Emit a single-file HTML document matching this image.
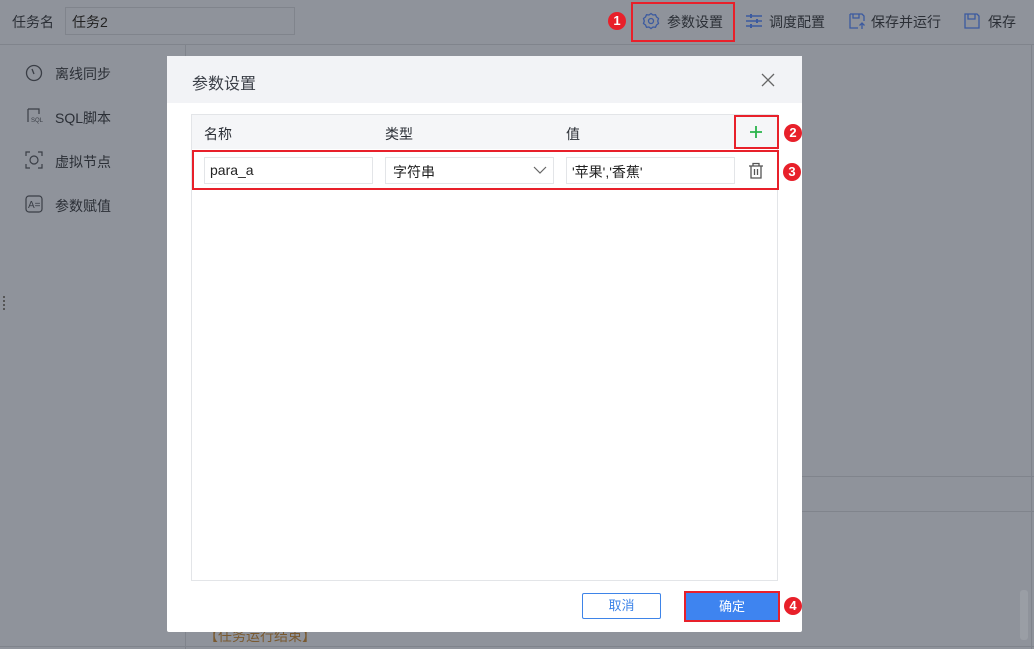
<!DOCTYPE html>
<html><head><meta charset="utf-8"><style>
*{box-sizing:border-box;margin:0;padding:0}
body{width:1034px;height:649px;overflow:hidden;background:#8f939b;font-family:"Liberation Sans","Noto Sans CJK SC",sans-serif;font-size:14px;color:#333;position:relative}
.a{position:absolute}
.t{color:#2b2f36}
.badge{position:absolute;width:18px;height:18px;border-radius:50%;background:#e8202a;color:#fff;font-size:13px;text-align:center;line-height:18px;font-weight:bold}
.rb{position:absolute;border:2px solid #e8202a}
</style></head><body>
<!-- background page -->
<div class="a" style="left:0;top:44px;width:1034px;height:1px;background:#80848c"></div>
<div class="a" style="left:185px;top:45px;width:1px;height:604px;background:#80848c"></div>
<div class="a" style="left:186px;top:476px;width:848px;height:1px;background:#80848c"></div>
<div class="a" style="left:186px;top:511px;width:848px;height:1px;background:#80848c"></div>
<div class="a" style="left:0;top:646px;width:1034px;height:1px;background:#80848c"></div>
<div class="a" style="left:1031px;top:45px;width:1px;height:604px;background:#80848c"></div>
<div class="a" style="left:1020px;top:590px;width:8px;height:50px;background:#9a9ea5;border-radius:3px"></div>
<div class="a t" style="left:12px;top:12px">任务名</div>
<div class="a" style="left:65px;top:7px;width:230px;height:28px;border:1px solid #80848c"></div>
<div class="a" style="left:72px;top:12px;color:#222">任务2</div>
<div class="a" style="left:204px;top:626px;color:#7a5a30">【任务运行结束】</div>

<svg class="a" style="left:24px;top:63px" width="20" height="20" viewBox="0 0 20 20" fill="none" stroke="#3a3e46" stroke-width="1.3"><circle cx="10" cy="10" r="7.5"/><path d="M8 6l2 5"/></svg>
<div class="a t" style="left:55px;top:64px">离线同步</div>
<svg class="a" style="left:24px;top:106px" width="20" height="20" viewBox="0 0 20 20" fill="none" stroke="#3a3e46" stroke-width="1.2"><path d="M4 3h11v5M4 3v13"/><text x="7" y="16" font-size="6" fill="#3a3e46" stroke="none">SQL</text></svg>
<div class="a t" style="left:55px;top:108px">SQL脚本</div>
<svg class="a" style="left:24px;top:150px" width="20" height="20" viewBox="0 0 20 20" fill="none" stroke="#3a3e46" stroke-width="1.2"><path d="M2 6V2h4M14 2h4v4M18 14v4h-4M6 18H2v-4"/><circle cx="10" cy="10" r="4"/></svg>
<div class="a t" style="left:55px;top:152px">虚拟节点</div>
<svg class="a" style="left:24px;top:194px" width="20" height="20" viewBox="0 0 20 20" fill="none" stroke="#3a3e46" stroke-width="1.2"><rect x="2" y="2" width="16" height="16" rx="3"/><text x="4" y="14" font-size="10" fill="#3a3e46" stroke="none">A=</text></svg>
<div class="a t" style="left:55px;top:196px">参数赋值</div>
<div class="a" style="left:3px;top:296px;width:2px;height:14px;border-left:2px dotted #555"></div>

<!-- toolbar -->
<div class="badge" style="left:608px;top:12px">1</div>
<div class="rb" style="left:631px;top:2px;width:104px;height:40px"></div>
<svg class="a" style="left:642px;top:12px" width="18" height="18" viewBox="0 0 18 18" fill="none" stroke="#3b5aa0" stroke-width="1.3"><circle cx="9" cy="9" r="2.5"/><path d="M9 1.5l2 1.5 2.5-.3 1 2.3 2 1.5-.8 2.5.8 2.5-2 1.5-1 2.3-2.5-.3-2 1.5-2-1.5-2.5.3-1-2.3-2-1.5.8-2.5-.8-2.5 2-1.5 1-2.3 2.5.3z"/></svg>
<div class="a t" style="left:667px;top:12px">参数设置</div>
<svg class="a" style="left:745px;top:13px" width="18" height="16" viewBox="0 0 18 16" fill="none" stroke="#3b5aa0" stroke-width="1.5"><path d="M1 3h16M1 8h16M1 13h16"/><path d="M6 1v4M12 6v4M6 11v4" stroke-width="2"/></svg>
<div class="a t" style="left:769px;top:12px">调度配置</div>
<svg class="a" style="left:848px;top:12px" width="18" height="18" viewBox="0 0 18 18" fill="none" stroke="#3b5aa0" stroke-width="1.3"><path d="M2 2h12l2 2v5M2 2v14h8"/><path d="M5 2v4h6V2"/><path d="M14 17v-6M11.5 13.5L14 11l2.5 2.5"/></svg>
<div class="a t" style="left:871px;top:12px">保存并运行</div>
<svg class="a" style="left:963px;top:12px" width="18" height="18" viewBox="0 0 18 18" fill="none" stroke="#3b5aa0" stroke-width="1.3"><path d="M2 2h12l2 2v12H2z"/><path d="M5 2v5h7V2"/></svg>
<div class="a t" style="left:988px;top:12px">保存</div>

<!-- dialog -->
<div class="a" style="left:167px;top:56px;width:635px;height:576px;background:#fff;border-radius:2px"></div>
<div class="a" style="left:167px;top:56px;width:635px;height:47px;background:#f2f3f6"></div>
<div class="a" style="left:192px;top:70px;font-size:16px;color:#3a3e46">参数设置</div>
<svg class="a" style="left:761px;top:73px" width="14" height="14" viewBox="0 0 14 14" stroke="#666" stroke-width="1.3"><path d="M1 1l12 12M13 1L1 13"/></svg>

<div class="a" style="left:191px;top:114px;width:587px;height:467px;border:1px solid #e3e5e8"></div>
<div class="a" style="left:192px;top:115px;width:585px;height:34px;background:#f5f6f8"></div>
<div class="a t" style="left:204px;top:124px">名称</div>
<div class="a t" style="left:385px;top:124px">类型</div>
<div class="a t" style="left:566px;top:124px">值</div>
<div class="rb" style="left:734px;top:115px;width:45px;height:34px"></div>
<svg class="a" style="left:749px;top:125px" width="14" height="14" viewBox="0 0 14 14" stroke="#2ab44a" stroke-width="1.8"><path d="M7 1v12M1 7h12"/></svg>
<div class="badge" style="left:784px;top:124px">2</div>

<div class="rb" style="left:192px;top:150px;width:587px;height:40px"></div>
<div class="a" style="left:204px;top:157px;width:169px;height:27px;border:1px solid #e3e5e8"></div>
<div class="a" style="left:210px;top:162px;color:#222">para_a</div>
<div class="a" style="left:385px;top:157px;width:169px;height:27px;border:1px solid #e3e5e8"></div>
<div class="a" style="left:393px;top:162px;color:#222">字符串</div>
<svg class="a" style="left:533px;top:166px" width="14" height="9" viewBox="0 0 14 9" fill="none" stroke="#666" stroke-width="1.2"><path d="M1 1l6 6 6-6"/></svg>
<div class="a" style="left:566px;top:157px;width:169px;height:27px;border:1px solid #e3e5e8"></div>
<div class="a" style="left:572px;top:162px;color:#222">'苹果','香蕉'</div>
<svg class="a" style="left:748px;top:162px" width="16" height="17" viewBox="0 0 16 17" fill="none" stroke="#555" stroke-width="1.3"><path d="M1 4h14M5 4V1.5h6V4M3 4v12h10V4M6.5 7v6M9.5 7v6"/></svg>
<div class="badge" style="left:783px;top:163px">3</div>

<div class="a" style="left:582px;top:593px;width:79px;height:26px;border:1px solid #3e84e8;border-radius:2px;color:#3e84e8;text-align:center;line-height:24px;font-size:13px">取消</div>
<div class="rb" style="left:684px;top:591px;width:96px;height:31px"></div>
<div class="a" style="left:686px;top:593px;width:92px;height:27px;background:#3e84f0;color:#fff;text-align:center;line-height:27px;font-size:13px">确定</div>
<div class="badge" style="left:784px;top:597px">4</div>
</body></html>
